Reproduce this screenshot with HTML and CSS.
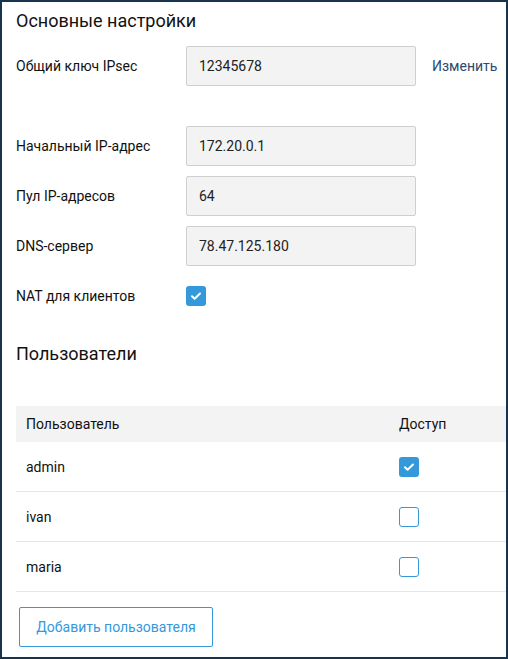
FILE: index.html
```html
<!DOCTYPE html>
<html lang="ru">
<head>
<meta charset="utf-8">
<link rel="stylesheet" href="styles.css">
</head>
<body>
<div class="panel">
  <h2 class="title first">Основные настройки</h2>
  <div class="form-row">
    <span class="label">Общий ключ IPsec</span>
    <div class="input">12345678</div>
    <a class="link">Изменить</a>
  </div>
  <div class="form-row spaced">
    <span class="label">Начальный IP-адрес</span>
    <div class="input">172.20.0.1</div>
  </div>
  <div class="form-row">
    <span class="label">Пул IP-адресов</span>
    <div class="input">64</div>
  </div>
  <div class="form-row">
    <span class="label">DNS-сервер</span>
    <div class="input">78.47.125.180</div>
  </div>
  <div class="form-row">
    <span class="label">NAT для клиентов</span>
    <span class="check on"><svg viewBox="0 0 20 20" width="20" height="20"><path d="M6 10.2l2.6 2.5 5.4-5.2" fill="none" stroke="#fff" stroke-width="2" stroke-linecap="round" stroke-linejoin="round"/></svg></span>
  </div>
  <h2 class="title users">Пользователи</h2>
  <div class="table">
    <div class="trow head">
      <span class="c-user">Пользователь</span>
      <span class="c-access">Доступ</span>
    </div>
    <div class="trow">
      <span class="c-user">admin</span>
      <span class="c-access"><span class="check on"><svg viewBox="0 0 20 20" width="20" height="20"><path d="M6 10.2l2.6 2.5 5.4-5.2" fill="none" stroke="#fff" stroke-width="2" stroke-linecap="round" stroke-linejoin="round"/></svg></span></span>
    </div>
    <div class="trow">
      <span class="c-user">ivan</span>
      <span class="c-access"><span class="check"></span></span>
    </div>
    <div class="trow">
      <span class="c-user">maria</span>
      <span class="c-access"><span class="check"></span></span>
    </div>
  </div>
  <button class="btn">Добавить пользователя</button>
</div>
</body>
</html>
```
FILE: styles.css
```css
html, body {
  margin: 0;
  padding: 0;
  background: #fff;
}
body {
  font-family: Roboto, "Liberation Sans", sans-serif;
  color: #111;
  font-size: 14px;
}
.panel {
  width: 508px;
  height: 659px;
  box-sizing: border-box;
  border: 2px solid #17344f;
  padding: 0 0 0 14px;
  overflow: hidden;
}
.title {
  margin: 0;
  font-size: 18px;
  font-weight: 400;
  line-height: 24px;
  color: #111;
}
.title.first {
  padding-top: 7px;
  margin-bottom: 13px;
}
.form-row {
  display: grid;
  grid-template-columns: 170px 230px auto;
  align-items: center;
  height: 40px;
  margin-bottom: 10px;
}
.form-row.spaced {
  margin-top: 40px;
}
.input {
  box-sizing: border-box;
  height: 40px;
  background: #f3f3f3;
  border: 1px solid #cfcfcf;
  border-radius: 2px;
  padding: 0 12px;
  line-height: 38px;
  color: #222;
}
.link {
  margin-left: 16px;
  color: #2c4a6b;
}
.check {
  box-sizing: border-box;
  display: inline-block;
  width: 20px;
  height: 20px;
  border: 1px solid #3498db;
  border-radius: 3px;
  background: #fff;
  vertical-align: middle;
}
.check.on {
  background: #3498db;
  border: none;
}
.check svg {
  display: block;
}
.title.users {
  margin-top: 25px;
  line-height: 26px;
}
.table {
  margin-top: 39px;
}
.trow {
  display: grid;
  grid-template-columns: 383px auto;
  align-items: center;
  height: 50px;
  border-bottom: 1px solid #dde8ef;
  box-sizing: border-box;
}
.trow.head {
  height: 36px;
  background: #f3f3f3;
  border-bottom: none;
}
.c-user {
  padding-left: 10px;
}
.c-access {
  display: flex;
  align-items: center;
}
.btn {
  display: block;
  margin: 15px 0 0 3px;
  width: 194px;
  height: 40px;
  box-sizing: border-box;
  background: #fff;
  border: 1px solid #3498db;
  border-radius: 2px;
  color: #3498db;
  font-family: Roboto, "Liberation Sans", sans-serif;
  font-size: 14px;
  padding: 0;
}
```
